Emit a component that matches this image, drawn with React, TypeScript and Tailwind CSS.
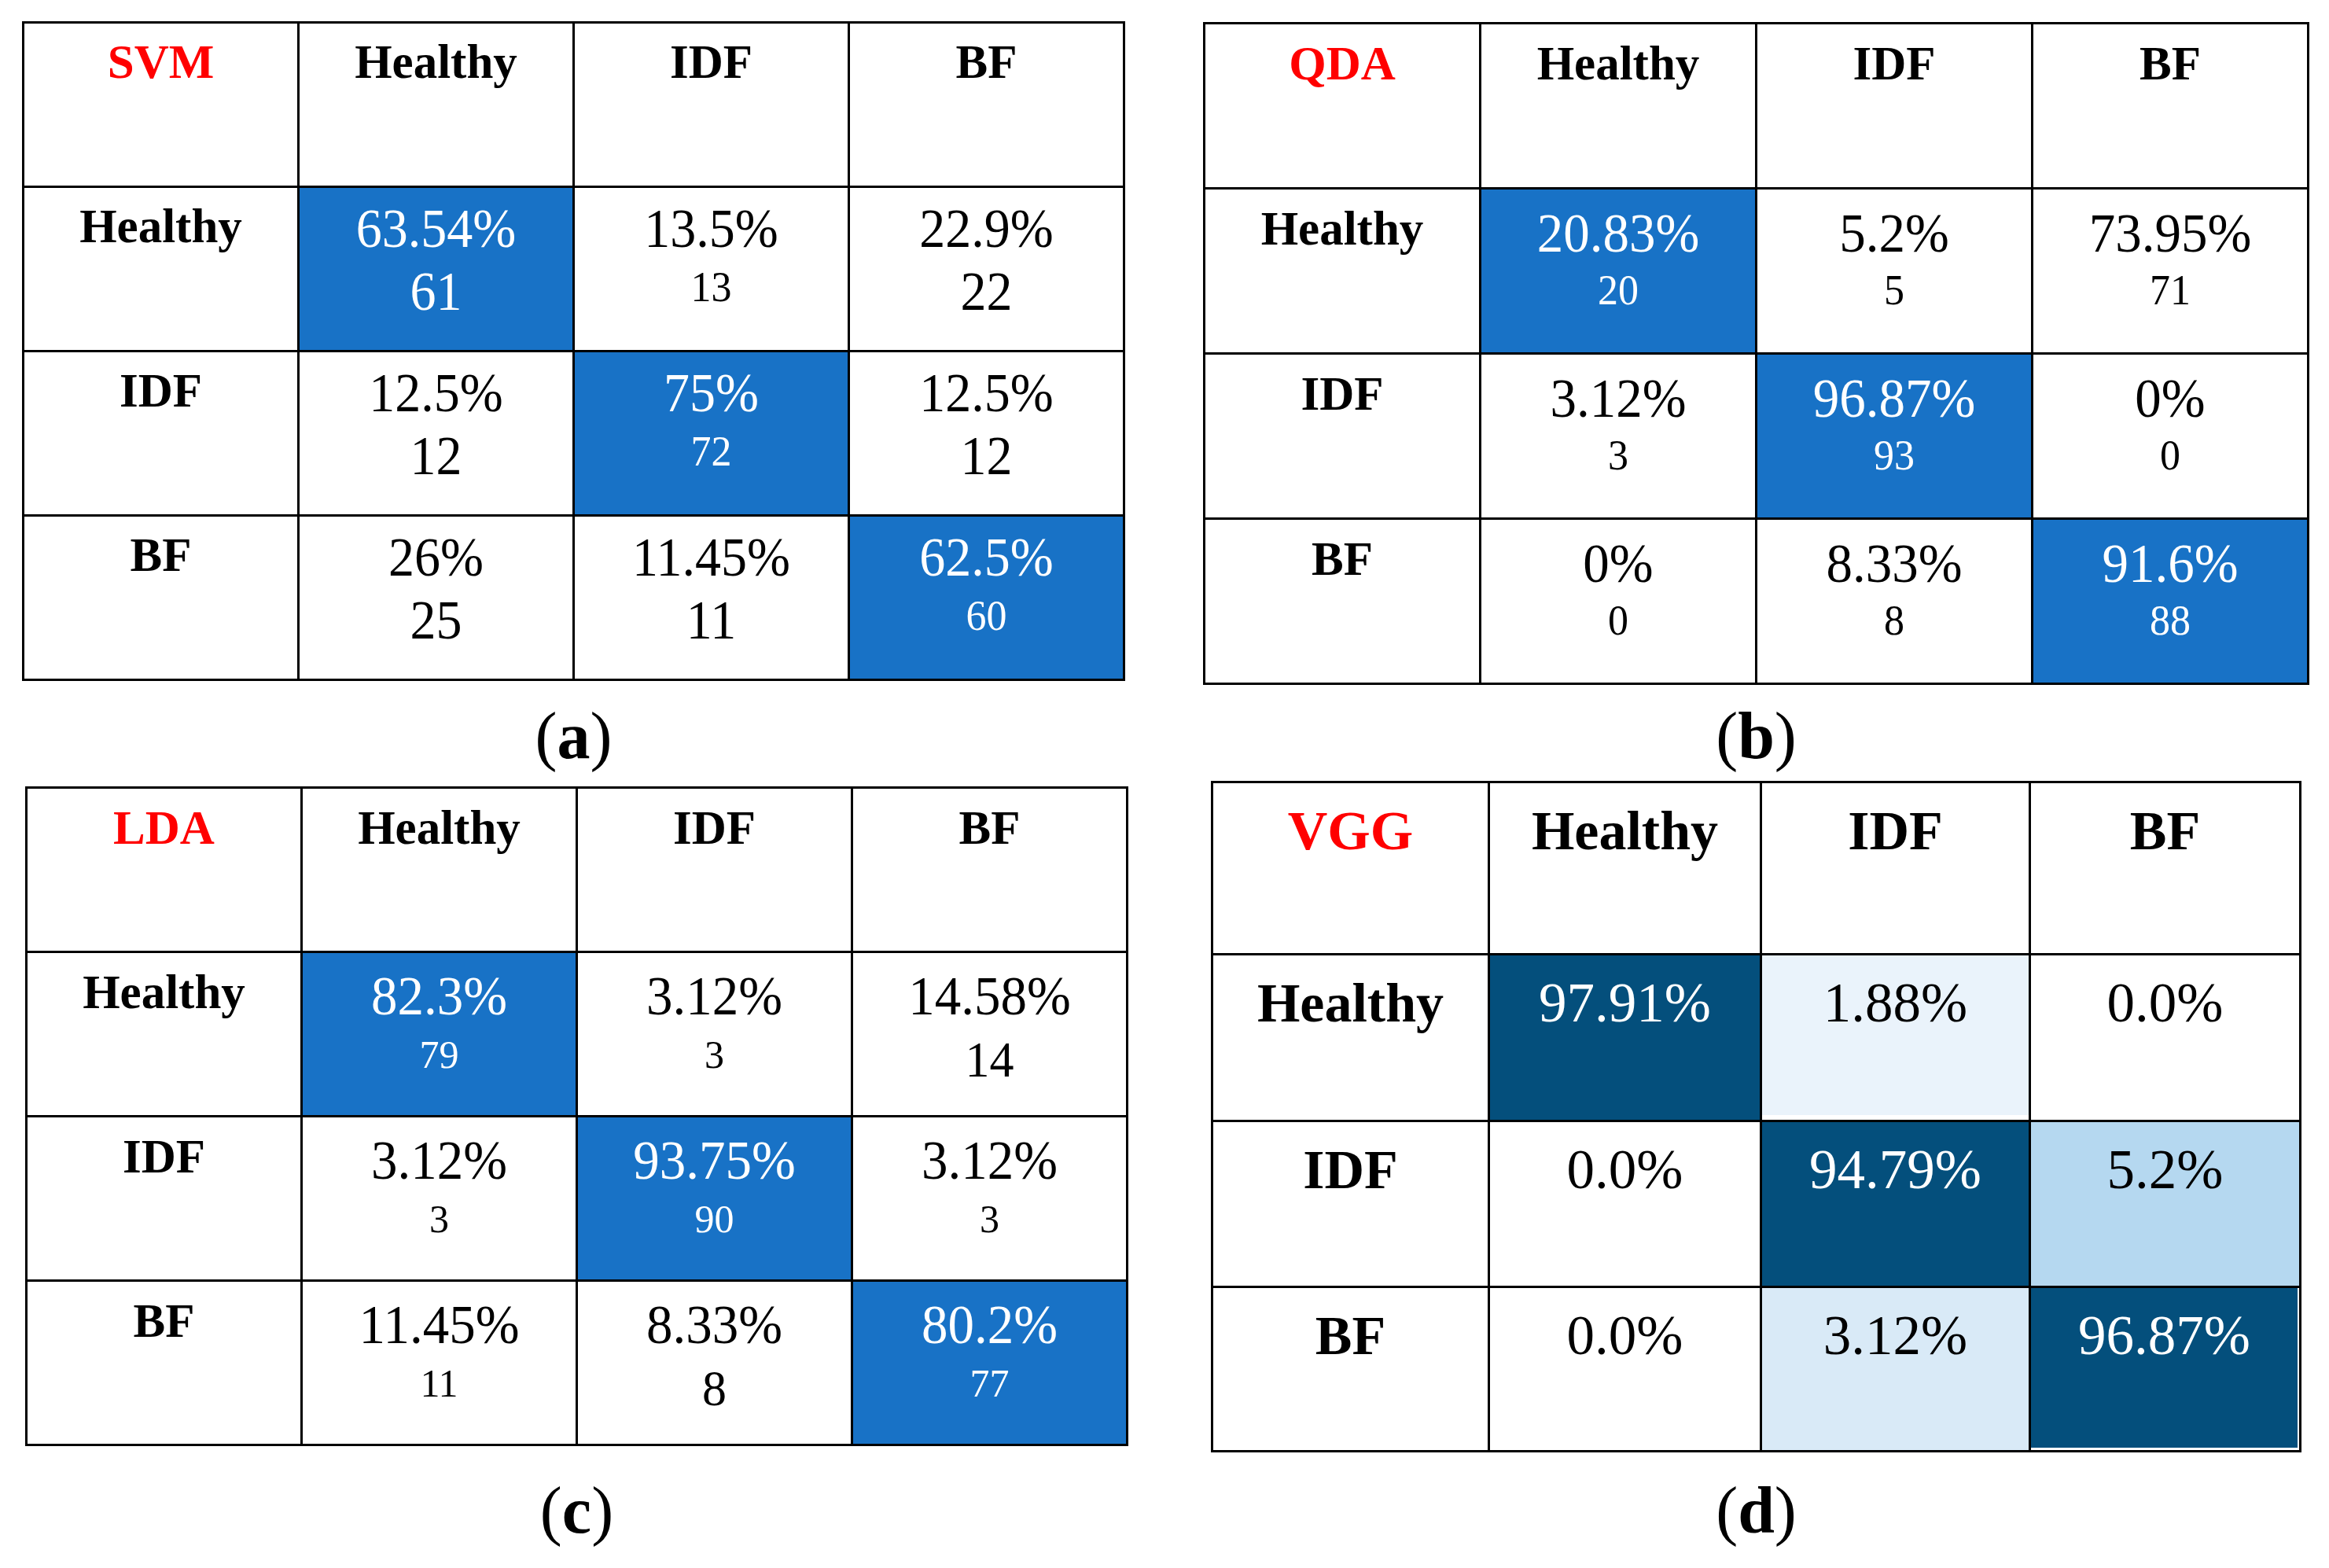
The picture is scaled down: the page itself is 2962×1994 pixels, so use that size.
import React from "react";

type Val = { pct: string; n?: string; big?: boolean; fill?: string; dark?: boolean; inset?: string };

type Look = {
    name: string;
    cols: string;
    rows: string;
    head: string;
    pct: string;
    big: string;
    small: string;
    tall: string;
};

const BLUE = "bg-[#1872c6]";
const NAVY = "bg-[#044f7c]";

const labels = ["Healthy", "IDF", "BF"];

const svm: Val[][] = [
    [{ pct: "63.54%", n: "61", big: true, fill: BLUE, dark: true }, { pct: "13.5%", n: "13" }, { pct: "22.9%", n: "22", big: true }],
    [{ pct: "12.5%", n: "12", big: true }, { pct: "75%", n: "72", fill: BLUE, dark: true }, { pct: "12.5%", n: "12", big: true }],
    [{ pct: "26%", n: "25", big: true }, { pct: "11.45%", n: "11", big: true }, { pct: "62.5%", n: "60", fill: BLUE, dark: true }],
];

const qda: Val[][] = [
    [{ pct: "20.83%", n: "20", fill: BLUE, dark: true }, { pct: "5.2%", n: "5" }, { pct: "73.95%", n: "71" }],
    [{ pct: "3.12%", n: "3" }, { pct: "96.87%", n: "93", fill: BLUE, dark: true }, { pct: "0%", n: "0" }],
    [{ pct: "0%", n: "0" }, { pct: "8.33%", n: "8" }, { pct: "91.6%", n: "88", fill: BLUE, dark: true }],
];

const lda: Val[][] = [
    [{ pct: "82.3%", n: "79", fill: BLUE, dark: true }, { pct: "3.12%", n: "3" }, { pct: "14.58%", n: "14", big: true }],
    [{ pct: "3.12%", n: "3" }, { pct: "93.75%", n: "90", fill: BLUE, dark: true }, { pct: "3.12%", n: "3" }],
    [{ pct: "11.45%", n: "11" }, { pct: "8.33%", n: "8", big: true }, { pct: "80.2%", n: "77", fill: BLUE, dark: true }],
];

const vgg: Val[][] = [
    [{ pct: "97.91%", fill: NAVY, dark: true }, { pct: "1.88%", fill: "bg-[#eaf3fb]", inset: "mb-[6px]" }, { pct: "0.0%" }],
    [{ pct: "0.0%" }, { pct: "94.79%", fill: NAVY, dark: true }, { pct: "5.2%", fill: "bg-[#b5d8f0]" }],
    [{ pct: "0.0%" }, { pct: "3.12%", fill: "bg-[#d9eaf7]" }, { pct: "96.87%", fill: NAVY, dark: true, inset: "mr-[2px] mb-[3px]" }],
];

function Matrix({ look, data }: { look: Look; data: Val[][] }) {
    // numbers in the source figures are slightly stretched vertically
    const t = `inline-block origin-[50%_77%] ${look.tall}`;
    return (
        <div className={`grid gap-[3px] bg-black p-[3px] ${look.cols} ${look.rows}`}>
            <div className="bg-white flex justify-center pt-[14px]">
                <span className={`font-bold text-[#ff0000] ${look.head}`}>{look.name}</span>
            </div>
            {labels.map((l) => (
                <div key={l} className="bg-white flex justify-center pt-[14px]">
                    <span className={`font-bold ${look.head}`}>{l}</span>
                </div>
            ))}
            {data.map((row, r) => (
                <React.Fragment key={r}>
                    <div className="bg-white flex justify-center pt-[14px]">
                        <span className={`font-bold ${look.head}`}>{labels[r]}</span>
                    </div>
                    {row.map((c, i) => (
                        <div key={i} className="bg-white flex">
                            <div className={`flex-1 flex flex-col items-center pt-[14px] ${c.fill ?? "bg-white"} ${c.inset ?? ""} ${c.dark ? "text-white" : "text-black"}`}>
                                <span className={`${t} ${look.pct}`}>{c.pct}</span>
                                {c.n && <span className={`${t} ${c.big ? look.big : look.small}`}>{c.n}</span>}
                            </div>
                        </div>
                    ))}
                </React.Fragment>
            ))}
        </div>
    );
}

function Caption({ ch, mt }: { ch: string; mt: string }) {
    return (
        <p className={`text-[84px] leading-[100px] text-black ${mt}`}>
            (<span className="font-bold">{ch}</span>)
        </p>
    );
}

const lookA: Look = {
    name: "SVM",
    cols: "grid-cols-[347px_347px_347px_347px]",
    rows: "grid-rows-[206px_206px_206px_206px]",
    head: "text-[61px] leading-[70px]",
    pct: "text-[66px] leading-[78px]",
    big: "text-[66px] leading-[82px]",
    small: "text-[52px] leading-[69px]",
    tall: "scale-y-[1.05]",
};

const lookB: Look = {
    name: "QDA",
    cols: "grid-cols-[348px_348px_348px_348px]",
    rows: "grid-rows-[207px_207px_207px_207px]",
    head: "text-[61px] leading-[72px]",
    pct: "text-[67px] leading-[84px]",
    big: "text-[67px] leading-[84px]",
    small: "text-[52px] leading-[62px]",
    tall: "scale-y-[1.05]",
};

const lookC: Look = {
    name: "LDA",
    cols: "grid-cols-[347px_347px_347px_347px]",
    rows: "grid-rows-[206px_206px_206px_206px]",
    head: "text-[61px] leading-[72px]",
    pct: "text-[67px] leading-[82px]",
    big: "text-[62px] leading-[81px]",
    small: "text-[50px] leading-[67px]",
    tall: "scale-y-[1.03]",
};

const lookD: Look = {
    name: "VGG",
    cols: "grid-cols-[349px_343px_339px_341px]",
    rows: "grid-rows-[216px_209px_208px_206px]",
    head: "text-[70px] leading-[94px]",
    pct: "text-[71px] leading-[93px]",
    big: "text-[71px] leading-[93px]",
    small: "text-[71px] leading-[93px]",
    tall: "scale-y-100",
};

export default function App() {
    return (
        <div className="w-[2962px] h-[1994px] bg-white text-black font-['Liberation_Serif','Times_New_Roman',serif] flex flex-col">
            {/* top pair */}
            <div className="flex items-start h-[986px]">
                <div className="ml-[28px] mt-[27px] flex flex-col items-center">
                    <Matrix look={lookA} data={svm} />
                    <Caption ch="a" mt="mt-[20px]" />
                </div>
                <div className="ml-[99px] mt-[28px] flex flex-col items-center">
                    <Matrix look={lookB} data={qda} />
                    <Caption ch="b" mt="mt-[15px]" />
                </div>
            </div>

            {/* bottom pair */}
            <div className="flex items-start">
                <div className="ml-[32px] mt-[14px] flex flex-col items-center">
                    <Matrix look={lookC} data={lda} />
                    <Caption ch="c" mt="mt-[32px]" />
                </div>
                <div className="ml-[105px] mt-[7px] flex flex-col items-center">
                    <Matrix look={lookD} data={vgg} />
                    <Caption ch="d" mt="mt-[24px]" />
                </div>
            </div>
        </div>
    );
}
